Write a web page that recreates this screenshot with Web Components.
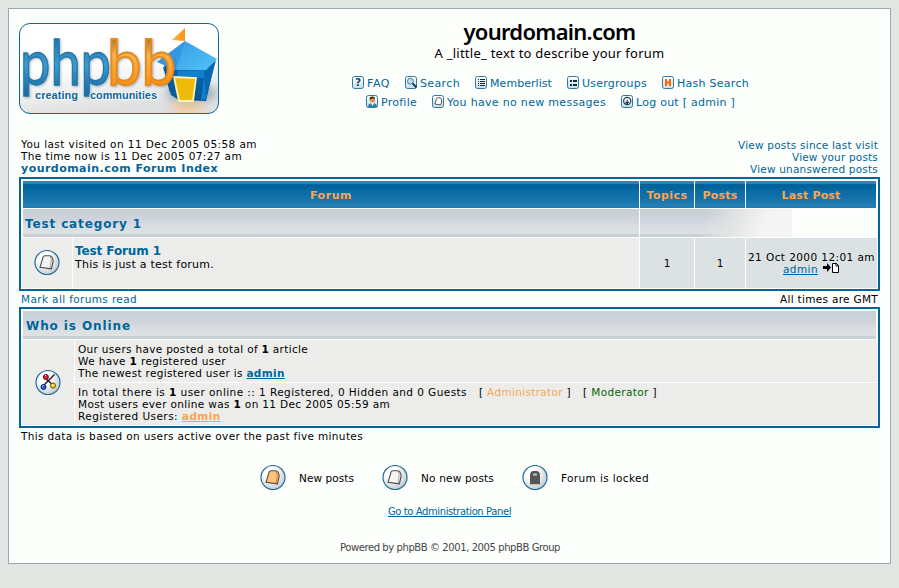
<!DOCTYPE html>
<html lang="en">
<head>
<meta charset="utf-8">
<title>yourdomain.com :: Index</title>
<style>
html,body{margin:0;padding:0}
body{background:#e4e6e3;font:10.5px/12px "DejaVu Sans",Verdana,sans-serif;color:#000;height:588px;overflow:hidden}
</style>
</head>
<body>
<forum-page></forum-page>
<script>
const define = (name, html, setup) => customElements.define(name, class extends HTMLElement {
  connectedCallback() {
    if (this.shadowRoot) return;
    const t = document.createElement('template');
    t.innerHTML = typeof html === 'function' ? html(this) : html;
    this.attachShadow({ mode: 'open' }).append(t.content.cloneNode(true));
    if (setup) setup(this);
  }
});

/* Line of text whose tracking is adjusted to fill a given width. */
define('fit-text', `<style>
  :host{display:inline-block;white-space:pre;vertical-align:top}
  span{display:inline-block;white-space:pre}
</style><span><slot></slot></span>`, el => {
  const w = +el.getAttribute('w');
  const span = el.shadowRoot.querySelector('span');
  const n = el.textContent.length;
  el.style.width = w + 'px';
  span.style.letterSpacing = ((w - span.getBoundingClientRect().width) / n).toFixed(4) + 'px';
});

/* Text link; colour and weight follow its attributes. */
define('text-link', `<style>
  :host{color:#006699}
  :host([u]){text-decoration:underline}
  :host([b]){font-weight:bold}
  :host([tone=admin]){color:#ffa34f}
</style><slot></slot>`);

const glyphs = {
  faq: '<text x="6.2" y="10.2" text-anchor="middle" font-family="DejaVu Sans" font-weight="bold" font-size="10" fill="#12405f">?</text>',
  search: '<circle cx="5.4" cy="5.2" r="2.9" fill="#b9e2f6" stroke="#447c9c"/><path d="M7.6 7.4L11.5 11.5" stroke="#123c58" stroke-width="2"/>',
  members: '<path d="M3 3.5h1M3 5.5h1M3 7.5h1M3 9.5h1M5 3.5h5M5 5.5h5M5 7.5h5M5 9.5h5" stroke="#102c40"/>',
  groups: '<path d="M3 5h2M3 9h2M6 5h4M6 9h4" stroke="#102c40" stroke-width="2"/>',
  hash: '<path d="M4 3v7M8 3v7M4 6.5h4" stroke="#ff6500" stroke-width="2" fill="none"/>',
  profile: '<path d="M2 12c0-3 2-4 4.500-4s4.500 1 4.500 4z" fill="#2d7dac"/><path d="M5 8l1.500 3L8 8z" fill="#fff"/><circle cx="6.500" cy="5" r="2.600" fill="#d99659"/><path d="M3.700 5V2.500Q6 .6 8.500 2L9 4 6 3.300z" fill="#43230f"/>',
  mail: '<path d="M2.800 9L4.600 3.500Q5 2.800 6.200 2.800H8Q9 2.800 9.400 4.300L9.700 7 8.700 9.900z" fill="#fff" stroke="#555"/>',
  logout: '<circle cx="6.200" cy="6" r="3.600" fill="#eef6fa" stroke="#28445b" stroke-width="1.200"/><path d="M6.200 4.500v5M4.700 7l1.500 2L7.700 7z" stroke="#173a56" fill="#173a56" stroke-width=".8"/>'
};
define('nav-link', el => `<style>
  :host{display:flex;gap:2px;color:#006699;font-size:11px;line-height:14px;height:14px}
  svg{display:block;flex:none;margin-top:-1px}
</style><svg width="13" height="13" viewBox="0 0 13 13"><defs><linearGradient id="g" x2="0" y2="1"><stop stop-color="#fff"/><stop offset="1" stop-color="#cadce5"/></linearGradient></defs>
<rect x=".5" y=".5" width="11" height="12" rx="2" fill="url(#g)" stroke="#2d7ba3"/>${glyphs[el.getAttribute('icon')]}</svg><div><slot></slot></div>`);

const page = 'M6 17.300L9 7.200Q9.500 5.700 11 5.700H16Q18.500 6.500 19 9.500V12L17.300 18.900z';
const badges = {
  read: `<path d="${page}" fill="#f4f4f4" stroke="#484848" stroke-width="1.100"/><path d="M16.400 7Q18 9 16.800 13L16 18" fill="none" stroke="#aaa"/>`,
  unread: `<path d="${page}" fill="#fcc27b" stroke="#5c4b38" stroke-width="1.100"/><path d="M16.400 7Q18 9 16.800 13L16 18" fill="none" stroke="#d18f46"/>`,
  locked: '<path d="M8 19.200V10.500Q8 6 11.500 6H14.500Q18 6 18 10.500V19.200z" fill="#565656"/><path d="M11 10.500V9.500Q11 8.500 12 8.500H14Q15 8.500 15 9.500V10.500z" fill="#c9cbcc"/>',
  online: '<path d="M19.500 4.500L8 16M10 8L18 15" stroke="#151515" stroke-width="1.400"/><circle cx="10.900" cy="7" r="2.500" fill="#e31e43" stroke="#5a0719"/><circle cx="8.500" cy="17" r="2.500" fill="#2463df" stroke="#092564"/><circle cx="18" cy="15.600" r="2.500" fill="#fbd723" stroke="#604d05"/><path d="M10 6l1-1M7.500 16.500l1-1M17 15l1-1" stroke="#fff"/>'
};
define('status-badge', el => `<style>:host{display:block;width:26px;height:26px;flex:none}svg{display:block}</style>
<svg width="26" height="26" viewBox="0 0 26 26"><defs><radialGradient id="r" cx=".35" cy=".3" r=".8"><stop offset=".3" stop-color="#fff"/><stop offset="1" stop-color="#bfc3c6"/></radialGradient></defs><circle cx="13" cy="12.500" r="12" fill="url(#r)" stroke="#236f99" stroke-width="1.200"/>${badges[el.getAttribute('kind')]}</svg>`);

define('forum-logo', `<style>:host{display:block;width:200px;height:91px}svg{display:block}</style>
<svg width="200" height="91" viewBox="0 0 200 91">
<defs>
<linearGradient id="bg" x2=".25" y2="1"><stop offset=".5" stop-color="#fff"/><stop offset="1" stop-color="#dfe0e1"/></linearGradient>
<linearGradient id="bl" x2="0" y2="1"><stop offset=".2" stop-color="#2079af"/><stop offset=".55" stop-color="#3c9bd0"/><stop offset="1" stop-color="#12629a"/></linearGradient>
<linearGradient id="or" x2="0" y2="1"><stop offset=".2" stop-color="#b97a27"/><stop offset=".42" stop-color="#ffb44b"/><stop offset=".8" stop-color="#fd9310"/></linearGradient>
<linearGradient id="fl" x2="1"><stop stop-color="#ffb545"/><stop offset="1" stop-color="#ff9410"/></linearGradient>
<linearGradient id="roof" x2="1" y2=".6"><stop stop-color="#2f94e4"/><stop offset="1" stop-color="#4dbcf4"/></linearGradient>
<linearGradient id="wall" x2="0" y2="1"><stop stop-color="#0b74c0"/><stop offset="1" stop-color="#075592"/></linearGradient>
<filter id="b" x="-40%" y="-40%" width="180%" height="180%"><feGaussianBlur stdDeviation="4"/></filter>
<filter id="s" x="-10%" y="-10%" width="120%" height="120%"><feDropShadow dx="1" dy="1" stdDeviation="1" flood-color="#47606f" flood-opacity=".45"/></filter>
<clipPath id="c"><rect width="200" height="91" rx="11"/></clipPath>
</defs>
<rect x=".5" y=".5" width="199" height="90" rx="10.500" fill="url(#bg)"/>
<g clip-path="url(#c)"><ellipse cx="172" cy="70" rx="25" ry="10" fill="#9badba" filter="url(#b)"/><ellipse cx="168" cy="84" rx="17" ry="5" fill="#ffbd74" opacity=".7" filter="url(#b)"/></g>
<path d="M145 43L152 72 160 77 187 78 195 42 167 19z" fill="url(#wall)"/>
<path d="M159 48L192 47 187 76 182 77 185 55H161L155 72z" fill="#107fd0"/>
<path d="M185 48L197 37 187 76z" fill="#0669b0"/>
<path d="M138 39L166 18 198 36 187 47H157z" fill="url(#roof)"/>
<path d="M138 39L166 18 157 47z" fill="#2d8ede" opacity=".6"/>
<path d="M144 44l13 4-6 22z" fill="#075798"/>
<path d="M155 54L177 55 174 78H160z" fill="#eebb0b" stroke="#fff3b3" stroke-width="1.800"/>
<path d="M153 17L166 5V18z" fill="url(#fl)"/>
<g font-family="Lato, sans-serif" font-size="61" filter="url(#s)">
<text x="1" y="62" textLength="91" lengthAdjust="spacingAndGlyphs" fill="url(#bl)" stroke="#2376a8" stroke-width="1.300">php</text>
<text x="88" y="62" textLength="69" lengthAdjust="spacingAndGlyphs" fill="url(#or)" stroke="#e38b20" stroke-width="1.900">bb</text></g>
<g font-family="Liberation Sans, Arial, sans-serif" font-size="11" font-weight="bold" fill="#0d669b" stroke="#f5f7f8" stroke-width="2" paint-order="stroke"><text x="16" y="76" textLength="43">creating</text><text x="71" y="76" textLength="67">communities</text></g>
<rect x=".5" y=".5" width="199" height="90" rx="10.500" fill="none" stroke="#0a679a"/>
</svg>`);

define('page-header', `<style>
  :host{display:grid;grid-template-columns:200px 1fr;padding-top:4px;height:116px;box-sizing:border-box}
  .main{display:flex;flex-direction:column;align-items:center;margin-top:-6px}
  h1{margin:0;font:600 22px/29px "Noto Sans","Open Sans",sans-serif}
  p{margin:-1px 0 0;font:13px/16px "Noto Sans",sans-serif}
  nav{display:flex;gap:15px;padding-left:2px;margin-top:16px;height:14px}
  nav+nav{margin-top:5px}
</style>
<forum-logo></forum-logo>
<div class="main">
<h1><fit-text w="172">yourdomain.com</fit-text></h1>
<p><fit-text w="230">A _little_ text to describe your forum</fit-text></p>
<nav><nav-link icon="faq"><fit-text w="23">FAQ</fit-text></nav-link><nav-link icon="search"><fit-text w="40">Search</fit-text></nav-link><nav-link icon="members"><fit-text w="62">Memberlist</fit-text></nav-link><nav-link icon="groups"><fit-text w="65">Usergroups</fit-text></nav-link><nav-link icon="hash"><fit-text w="72">Hash Search</fit-text></nav-link></nav>
<nav><nav-link icon="profile"><fit-text w="36">Profile</fit-text></nav-link><nav-link icon="mail"><fit-text w="159">You have no new messages</fit-text></nav-link><nav-link icon="logout"><fit-text w="99">Log out [ admin ]</fit-text></nav-link></nav>
</div>`);

define('visit-info', `<style>
  :host{display:flex;justify-content:space-between;padding:3px 2px 0;height:42px;box-sizing:border-box}
  div{display:flex;flex-direction:column}
  .r{align-items:flex-end;padding-top:1px}
  .i{font-size:11px;line-height:14px}
</style>
<div><fit-text w="236">You last visited on 11 Dec 2005 05:58 am</fit-text><fit-text w="221">The time now is 11 Dec 2005 07:27 am</fit-text><text-link b class="i"><fit-text w="197">yourdomain.com Forum Index</fit-text></text-link></div>
<div class="r"><text-link><fit-text w="140">View posts since last visit</fit-text></text-link><text-link><fit-text w="86">View your posts</fit-text></text-link><text-link><fit-text w="128">View unanswered posts</fit-text></text-link></div>`);

/* Bordered panel laid out as a grid with hairline gaps. */
define('forum-panel', `<style>
  :host{display:grid;box-sizing:border-box;border:2px solid #006699;padding:1px;gap:1px;background:#fff}
</style><slot></slot>`);

define('head-cell', `<style>
  :host{display:flex;align-items:center;justify-content:center;margin-top:1px;color:#ffa34f;font:bold 11px/14px "DejaVu Sans",sans-serif;padding-top:2px;
  background:linear-gradient(#3681aa 0 3px,#00639b 3px 6px,#0b6ba5 10px,#1172aa 17px,#2580b5 25px,#1a7ab0 27px)}
  :host([first]){margin-left:1px}:host([last]){margin-right:1px}
</style><slot></slot>`);

define('band-cell', `<style>
  :host{display:flex;align-items:center;color:#006699;font:bold 12px/16px "DejaVu Sans",sans-serif;margin-left:1px;padding:1px 0 0 2px;
  background:linear-gradient(#c9d1d8 0 6px,#d3d6df 13px,#d8dde2 17px,#dee2e3 25px,#c8d0d4 25px)}
  :host([fade]){margin-left:0;padding:0;
  background:linear-gradient(115deg,#e3e5e400 42%,#e3e5e4 62%,#f4f4f5 80%) 0 0/152px 100% no-repeat,linear-gradient(#c9d1d8 0 6px,#d3d6df 13px,#dce2e3 25px,#c8d0d4 25px) 0 0/152px 100% no-repeat,#fdfffd}
</style><slot></slot>`);

define('data-cell', `<style>
  :host{display:flex;flex-direction:column;align-items:center;justify-content:center;background:#ecedeb}
  :host([alt]){background:#dce2e4}
  :host([text]){align-items:flex-start;justify-content:flex-start}
</style><slot></slot>`);

define('forum-table', `<style>
  :host{display:block}
  forum-panel{height:114px;grid-template-columns:50px 566px 54px 50px 131px;grid-template-rows:28px 28px 50px}
  .w2{grid-column:span 2}.w3{grid-column:span 3}
  .name{padding:5px 0 0 2px;line-height:14px;font-size:11px}
  .name text-link{font-size:12px;line-height:16px;height:15px}
  .last{display:flex;gap:4px}
  svg{display:block}
</style>
<forum-panel>
<head-cell first class="w2"><fit-text w="42">Forum</fit-text></head-cell><head-cell><fit-text w="41">Topics</fit-text></head-cell><head-cell><fit-text w="35">Posts</fit-text></head-cell><head-cell last><fit-text w="59">Last Post</fit-text></head-cell>
<band-cell class="w2"><fit-text w="117">Test category 1</fit-text></band-cell><band-cell fade class="w3"></band-cell>
<data-cell><status-badge kind="read"></status-badge></data-cell>
<data-cell text class="name"><text-link b><fit-text w="86">Test Forum 1</fit-text></text-link><fit-text w="139">This is just a test forum.</fit-text></data-cell>
<data-cell alt><span>1</span></data-cell><data-cell alt><span>1</span></data-cell>
<data-cell alt><fit-text w="127">21 Oct 2000 12:01 am</fit-text><div class="last"><fit-text w="35"><text-link u>admin</text-link></fit-text><svg width="18" height="10" viewBox="0 0 18 10"><path d="M1 3h4V0l4 4.500L5 9V6H1z"/><path d="M10.500.5h4l2 2v7h-6z" fill="#fff" stroke="#000"/><path d="M14 0v3h3" fill="none" stroke="#000"/></svg></div></data-cell>
</forum-panel>`);

define('online-table', `<style>
  :host{display:block}
  forum-panel{height:121px;grid-template-columns:52px 802px;grid-template-rows:29px 42px 42px}
  band-cell{grid-column:span 2;margin:1px 1px 0;padding-left:3px}
  .icon{grid-row:span 2}
  .t{padding:3px 0 0 3px}
  .t>div{display:flex;gap:12px;height:12px}
</style>
<forum-panel>
<band-cell><fit-text w="105">Who is Online</fit-text></band-cell>
<data-cell class="icon"><status-badge kind="online"></status-badge></data-cell>
<data-cell text class="t"><fit-text w="230">Our users have posted a total of <b>1</b> article</fit-text><fit-text w="148">We have <b>1</b> registered user</fit-text><fit-text w="203">The newest registered user is <text-link u b>admin</text-link></fit-text></data-cell>
<data-cell text class="t"><div><fit-text w="389">In total there is <b>1</b> user online :: 1 Registered, 0 Hidden and 0 Guests</fit-text><fit-text w="92">[ <text-link tone="admin">Administrator</text-link> ]</fit-text><fit-text w="74">[ <span style="color:#060">Moderator</span> ]</fit-text></div><fit-text w="312">Most users ever online was <b>1</b> on 11 Dec 2005 05:59 am</fit-text><fit-text w="139">Registered Users: <text-link u b tone="admin">admin</text-link></fit-text></data-cell>
</forum-panel>`);

define('icon-legend', `<style>
  :host{display:flex;justify-content:center;gap:28px;height:26px;align-items:center}
  div{display:flex;gap:13px;align-items:center}
</style>
<div><status-badge kind="unread"></status-badge><fit-text w="55">New posts</fit-text></div>
<div><status-badge kind="read"></status-badge><fit-text w="73">No new posts</fit-text></div>
<div><status-badge kind="locked"></status-badge><fit-text w="88">Forum is locked</fit-text></div>`);

define('forum-page', `<style>
  :host{display:block;box-sizing:border-box;width:883px;height:556px;margin:8px;border:1px solid #98aab1;background:#fdfffd;padding:10px}
  .bar{display:flex;justify-content:space-between;height:16px;padding:2px 2px 0;box-sizing:border-box}
  .foot{display:flex;flex-direction:column;align-items:center;font-size:10px}
</style>
<page-header></page-header>
<visit-info></visit-info>
<forum-table></forum-table>
<div class="bar"><text-link><fit-text w="116">Mark all forums read</fit-text></text-link><fit-text w="98">All times are GMT</fit-text></div>
<online-table></online-table>
<div class="bar"><fit-text w="342">This data is based on users active over the past five minutes</fit-text></div>
<icon-legend style="margin:21px 0 0 10px"></icon-legend>
<div class="foot"><fit-text w="123" style="margin-top:15px"><text-link u>Go to Administration Panel</text-link></fit-text><fit-text w="220" style="margin:24px 0 0 1px;color:#444">Powered by phpBB © 2001, 2005 phpBB Group</fit-text></div>`);
</script>
</body>
</html>
